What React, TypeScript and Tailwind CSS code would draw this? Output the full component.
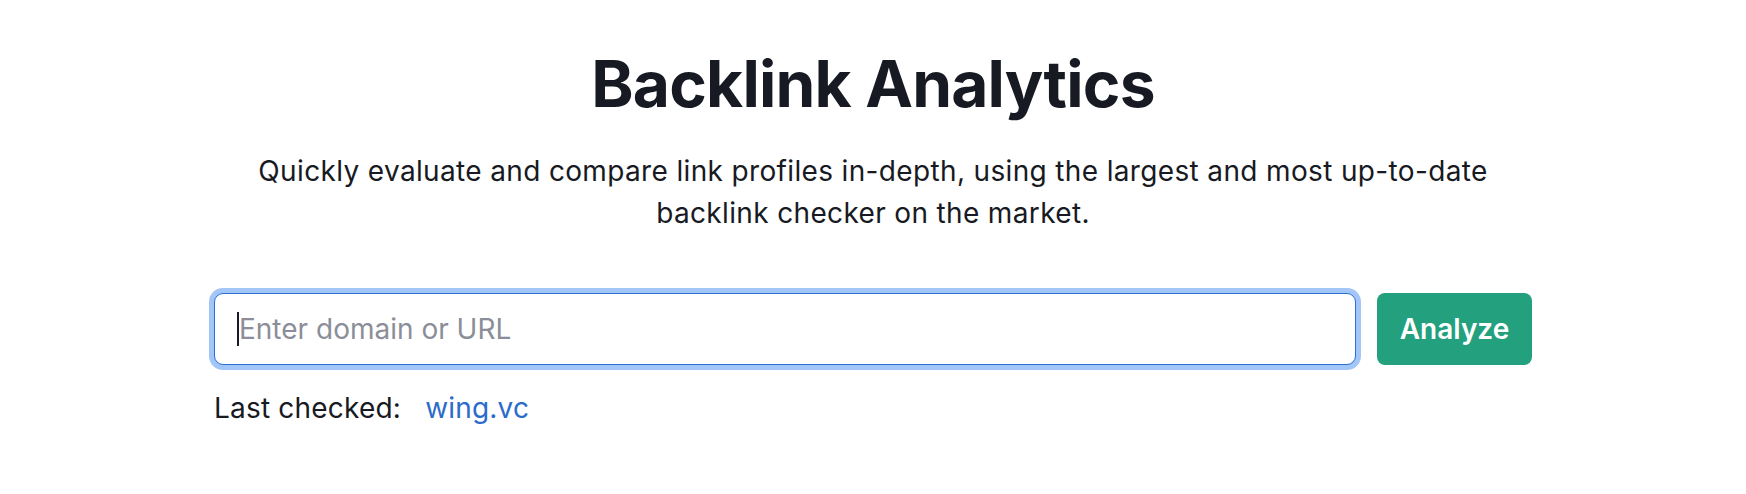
import React from 'react';

export default function App() {
  return (
    <div className="min-h-screen w-full bg-white font-['Inter','Liberation_Sans',sans-serif] text-[#171a22]">
      <div className="mx-auto flex w-[1318px] flex-col items-center pt-[52px]">
        <h1 className="text-[64px] leading-[64px] font-bold tracking-[-0.8px]">Backlink Analytics</h1>
        <p className="mt-[34px] max-w-[1300px] text-center text-[28px] leading-[42px] tracking-[0.35px]">
          Quickly evaluate and compare link profiles in-depth, using the largest and most up-to-date backlink checker on the market.
        </p>

        {/* Search row */}
        <div className="mt-[59px] flex w-full items-center gap-[21px]">
          <div className="relative flex-1">
            <input
              type="text"
              placeholder="Enter domain or URL"
              className="h-[72px] w-full rounded-[9px] border border-[#2c6fd3] bg-white pl-[24px] text-[28px] text-[#171a22] shadow-[0_0_0_5px_#a3c6f8] outline-none placeholder:text-[#8b8e98]"
            />
            <span className="absolute left-[23px] top-[19px] h-[34px] w-[2px] bg-[#171a22]" />
          </div>
          <button className="h-[72px] w-[155px] shrink-0 rounded-[8px] bg-[#23a07e] text-[28px] font-semibold text-white">
            Analyze
          </button>
        </div>

        {/* Last checked */}
        <div className="mt-[23px] flex w-full items-center gap-[24px] text-[28px] leading-[40px] tracking-[0.2px]">
          <span>Last checked:</span>
          <a href="#" className="text-[#2b6bcb]">wing.vc</a>
        </div>
      </div>
    </div>
  );
}
